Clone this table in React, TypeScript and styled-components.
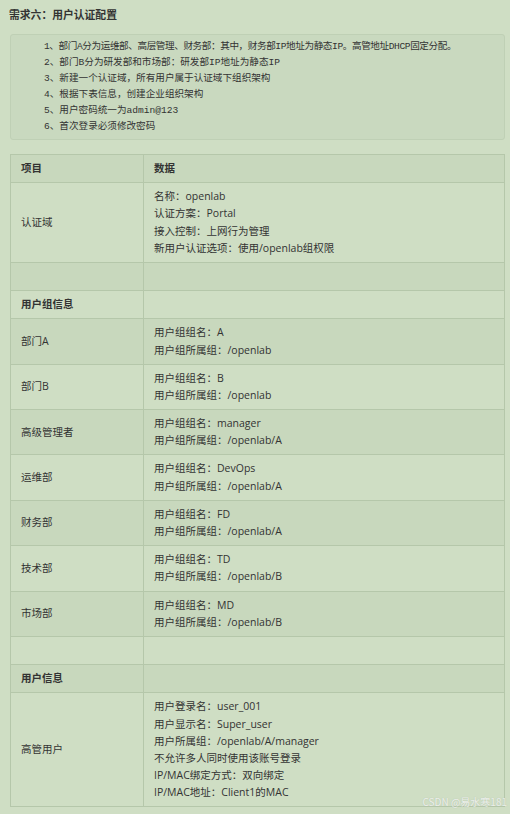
import React from "react";
import styled, { createGlobalStyle } from "styled-components";

const GlobalStyle = createGlobalStyle`
  html, body {
    margin: 0;
    padding: 0;
    background: #cfdec4;
  }
  body {
    font-family: "Open Sans", "Noto Sans CJK SC", sans-serif;
    color: #333;
  }
`;

const Page = styled.div`
  position: relative;
  width: 510px;
  height: 814px;
  overflow: hidden;
  box-sizing: border-box;
  padding: 6px 5px 0 10px;
  background: #cfdec4;
`;

const Title = styled.h3`
  margin: 0 0 0 -1px;
  font-size: 10.8px;
  line-height: 17px;
  font-weight: 700;
  color: #333;
`;

const Quote = styled.div`
  margin-top: 11px;
  box-sizing: border-box;
  border: 1px solid #bfd0b5;
  border-radius: 3px;
  background: #c9d9bf;
  padding: 4px 10px 4px 33px;
`;

const List = styled.ol`
  margin: 0;
  padding: 0;
  list-style: none;
  font-family: "Liberation Mono", "Noto Sans CJK SC", monospace;
  font-size: 9.6px;
  line-height: 16px;
  color: #333;
`;

const Item = styled.li<{ $spacing?: number }>`
  white-space: nowrap;
  height: 16px;
  letter-spacing: ${(p) => p.$spacing ?? 0}px;
`;

const Table = styled.table`
  margin-top: 14px;
  width: 495px;
  border-collapse: collapse;
  table-layout: fixed;
  font-family: "Open Sans", "Noto Sans CJK SC", sans-serif;
  font-size: 10.5px;
  color: #333;

  tr:nth-child(odd) {
    background: #c8d8bd;
  }
  tr:nth-child(even) {
    background: #cfdec4;
  }
`;

const Cell = styled.td<{ $head?: boolean }>`
  border: 1px solid #b5c7aa;
  padding: 5px 10px;
  vertical-align: middle;
  font-weight: ${(p) => (p.$head ? 700 : 400)};
  white-space: nowrap;
`;

const Line = styled.div`
  height: 17.2px;
  line-height: 17.2px;
`;

const Watermark = styled.div`
  position: absolute;
  right: 3px;
  top: 795px;
  font-family: "Noto Sans CJK SC", sans-serif;
  font-size: 10px;
  line-height: 14px;
  color: rgba(255, 255, 255, 0.75);
  text-shadow: 0 0 1px rgba(150, 160, 150, 0.6);
`;

type Row = { name: string; lines: string[]; head?: boolean };

const rows: Row[] = [
  { name: "项目", lines: ["数据"], head: true },
  {
    name: "认证域",
    lines: [
      "名称：openlab",
      "认证方案：Portal",
      "接入控制：上网行为管理",
      "新用户认证选项：使用/openlab组权限",
    ],
  },
  { name: "", lines: [""] },
  { name: "用户组信息", lines: [""], head: true },
  { name: "部门A", lines: ["用户组组名：A", "用户组所属组：/openlab"] },
  { name: "部门B", lines: ["用户组组名：B", "用户组所属组：/openlab"] },
  { name: "高级管理者", lines: ["用户组组名：manager", "用户组所属组：/openlab/A"] },
  { name: "运维部", lines: ["用户组组名：DevOps", "用户组所属组：/openlab/A"] },
  { name: "财务部", lines: ["用户组组名：FD", "用户组所属组：/openlab/A"] },
  { name: "技术部", lines: ["用户组组名：TD", "用户组所属组：/openlab/B"] },
  { name: "市场部", lines: ["用户组组名：MD", "用户组所属组：/openlab/B"] },
  { name: "", lines: [""] },
  { name: "用户信息", lines: [""], head: true },
  {
    name: "高管用户",
    lines: [
      "用户登录名：user_001",
      "用户显示名：Super_user",
      "用户所属组：/openlab/A/manager",
      "不允许多人同时使用该账号登录",
      "IP/MAC绑定方式：双向绑定",
      "IP/MAC地址：Client1的MAC",
    ],
  },
];

const items: { text: string; spacing?: number }[] = [
  {
    text: "1、部门A分为运维部、高层管理、财务部：其中，财务部IP地址为静态IP。高管地址DHCP固定分配。",
    spacing: -0.4,
  },
  { text: "2、部门B分为研发部和市场部：研发部IP地址为静态IP" },
  { text: "3、新建一个认证域，所有用户属于认证域下组织架构" },
  { text: "4、根据下表信息，创建企业组织架构" },
  { text: "5、用户密码统一为admin@123" },
  { text: "6、首次登录必须修改密码" },
];

export default function App() {
  return (
    <>
      <GlobalStyle />
      <Page>
        <Title>需求六：用户认证配置</Title>
        <Quote>
          <List>
            {items.map((t) => (
              <Item key={t.text} $spacing={t.spacing}>
                {t.text}
              </Item>
            ))}
          </List>
        </Quote>
        <Table>
          <colgroup>
            <col style={{ width: 133 }} />
            <col />
          </colgroup>
          <tbody>
            {rows.map((r, i) => (
              <tr key={i}>
                <Cell $head={r.head}>
                  <Line>{r.name || "\u00a0"}</Line>
                </Cell>
                <Cell $head={r.head && i === 0}>
                  {r.lines.map((l, j) => (
                    <Line key={j}>{l || "\u00a0"}</Line>
                  ))}
                </Cell>
              </tr>
            ))}
          </tbody>
        </Table>
        <Watermark>CSDN @易水寒181</Watermark>
      </Page>
    </>
  );
}
